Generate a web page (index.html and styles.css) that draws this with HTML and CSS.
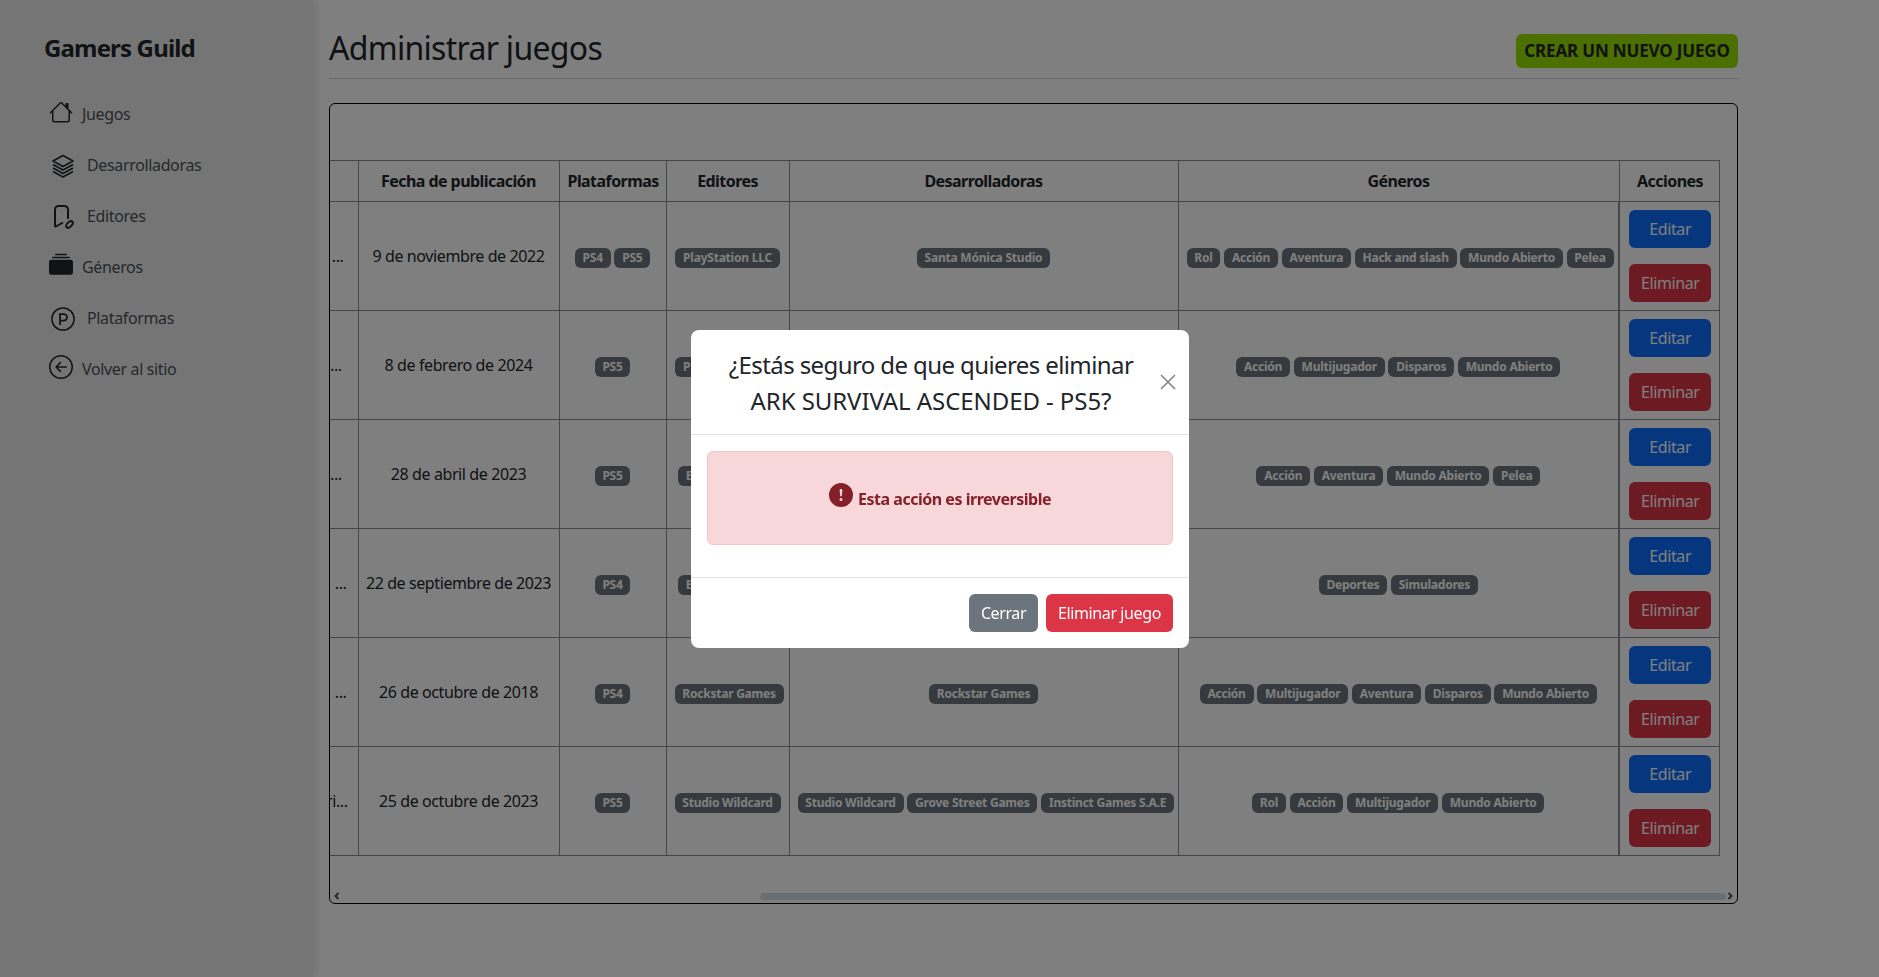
FILE: index.html
```html
<!DOCTYPE html>
<html lang="es">
<head>
<meta charset="utf-8">
<title>Administrar juegos</title>
<link rel="stylesheet" href="styles.css">
</head>
<body>
<div class="layout">
  <aside class="sidebar">
    <div class="brand">Gamers Guild</div>
    <nav class="nav">
      <a class="nav-item"><svg class="ico" viewBox="0 0 16 16"><path fill="currentColor" d="M8.707 1.5a1 1 0 0 0-1.414 0L.646 8.146a.5.5 0 0 0 .708.708L2 8.207V13.5A1.5 1.5 0 0 0 3.5 15h9a1.5 1.5 0 0 0 1.5-1.5V8.207l.646.647a.5.5 0 0 0 .708-.708L13 5.793V2.5a.5.5 0 0 0-.5-.5h-1a.5.5 0 0 0-.5.5v1.293L8.707 1.5ZM13 7.207V13.5a.5.5 0 0 1-.5.5h-9a.5.5 0 0 1-.5-.5V7.207l5-5 5 5Z"/></svg><span>Juegos</span></a>
      <a class="nav-item nav-item--wide"><svg class="ico" viewBox="0 0 24 24" fill="none" stroke="currentColor" stroke-width="1.6" stroke-linejoin="round"><path d="M12 1.5 22 7l-10 5.500L2 7z"/><path d="M2 10.500l10 5.500 10-5.500M2 14l10 5.500L22 14M2 17.500 12 23l10-5.500"/></svg><span>Desarrolladoras</span></a>
      <a class="nav-item nav-item--wide"><svg class="ico" viewBox="0 0 24 24" fill="none" stroke="currentColor" stroke-width="2"><path d="M4 22V4.500A3.500 3.500 0 0 1 7.500 1h6A3.500 3.500 0 0 1 17 4.500V14M4 22l8-4.500"/><ellipse cx="18.500" cy="19.500" rx="4" ry="2.300" transform="rotate(-45 18.500 19.500)"/></svg><span>Editores</span></a>
      <a class="nav-item"><svg class="ico" viewBox="0 0 16 16"><path fill="currentColor" d="M0 13a1.500 1.500 0 0 0 1.500 1.500h13A1.500 1.500 0 0 0 16 13V6a1.500 1.500 0 0 0-1.500-1.500h-13A1.500 1.500 0 0 0 0 6v7zM2 3a.5.5 0 0 0 .5.5h11a.5.5 0 0 0 0-1h-11A.5.5 0 0 0 2 3zm2-2a.5.5 0 0 0 .5.5h7a.5.5 0 0 0 0-1h-7A.5.5 0 0 0 4 1z"/></svg><span>Géneros</span></a>
      <a class="nav-item nav-item--wide"><svg class="ico" viewBox="0 0 16 16" fill="none" stroke="currentColor"><circle cx="8" cy="8" r="7.400" stroke-width="1"/><path stroke-width="1.200" d="M6 12V4.700h2.500a2.200 2.200 0 0 1 0 4.400H6"/></svg><span>Plataformas</span></a>
      <a class="nav-item"><svg class="ico" viewBox="0 0 16 16" fill="none" stroke="currentColor"><circle cx="8" cy="8" r="7.500" stroke-width="1"/><path stroke-width="1" stroke-linecap="round" stroke-linejoin="round" d="M11.500 8H4.700M7.600 5.100 4.700 8l2.900 2.900"/></svg><span>Volver al sitio</span></a>
    </nav>
  </aside>

  <main class="main">
    <header class="page-head">
      <h1 class="page-title">Administrar juegos</h1>
      <button class="btn btn-create">CREAR UN NUEVO JUEGO</button>
    </header>

    <section class="card">
      <div class="table-wrap">
        <table class="games">
          <colgroup>
            <col class="c-name"><col class="c-date"><col class="c-plat"><col class="c-pub"><col class="c-dev"><col class="c-gen"><col class="c-act">
          </colgroup>
          <thead>
            <tr><th></th><th>Fecha de publicación</th><th>Plataformas</th><th>Editores</th><th>Desarrolladoras</th><th>Géneros</th><th>Acciones</th></tr>
          </thead>
          <tbody>
            <tr>
              <td class="name name-a">...</td>
              <td>9 de noviembre de 2022</td>
              <td><span class="badge">PS4</span> <span class="badge">PS5</span></td>
              <td><span class="badge">PlayStation LLC</span></td>
              <td><span class="badge">Santa Mónica Studio</span></td>
              <td><span class="badge">Rol</span> <span class="badge">Acción</span> <span class="badge">Aventura</span> <span class="badge">Hack and slash</span> <span class="badge">Mundo Abierto</span> <span class="badge">Pelea</span></td>
              <td class="actions"><button class="btn btn-edit">Editar</button><button class="btn btn-del">Eliminar</button></td>
            </tr>
            <tr>
              <td class="name name-b">...</td>
              <td>8 de febrero de 2024</td>
              <td><span class="badge">PS5</span></td>
              <td><span class="badge">PlayStation LLC</span></td>
              <td></td>
              <td><span class="badge">Acción</span> <span class="badge">Multijugador</span> <span class="badge">Disparos</span> <span class="badge">Mundo Abierto</span></td>
              <td class="actions"><button class="btn btn-edit">Editar</button><button class="btn btn-del">Eliminar</button></td>
            </tr>
            <tr>
              <td class="name name-c">...</td>
              <td>28 de abril de 2023</td>
              <td><span class="badge">PS5</span></td>
              <td><span class="badge">Electronic Arts</span></td>
              <td></td>
              <td><span class="badge">Acción</span> <span class="badge">Aventura</span> <span class="badge">Mundo Abierto</span> <span class="badge">Pelea</span></td>
              <td class="actions"><button class="btn btn-edit">Editar</button><button class="btn btn-del">Eliminar</button></td>
            </tr>
            <tr>
              <td class="name name-d">...</td>
              <td>22 de septiembre de 2023</td>
              <td><span class="badge">PS4</span></td>
              <td><span class="badge">Electronic Arts</span></td>
              <td></td>
              <td><span class="badge">Deportes</span> <span class="badge">Simuladores</span></td>
              <td class="actions"><button class="btn btn-edit">Editar</button><button class="btn btn-del">Eliminar</button></td>
            </tr>
            <tr>
              <td class="name name-d">...</td>
              <td>26 de octubre de 2018</td>
              <td><span class="badge">PS4</span></td>
              <td><span class="badge">Rockstar Games</span></td>
              <td><span class="badge">Rockstar Games</span></td>
              <td><span class="badge">Acción</span> <span class="badge">Multijugador</span> <span class="badge">Aventura</span> <span class="badge">Disparos</span> <span class="badge">Mundo Abierto</span></td>
              <td class="actions"><button class="btn btn-edit">Editar</button><button class="btn btn-del">Eliminar</button></td>
            </tr>
            <tr>
              <td class="name name-e">ri...</td>
              <td>25 de octubre de 2023</td>
              <td><span class="badge">PS5</span></td>
              <td><span class="badge">Studio Wildcard</span></td>
              <td><span class="badge">Studio Wildcard</span> <span class="badge">Grove Street Games</span> <span class="badge">Instinct Games S.A.E</span></td>
              <td><span class="badge">Rol</span> <span class="badge">Acción</span> <span class="badge">Multijugador</span> <span class="badge">Mundo Abierto</span></td>
              <td class="actions"><button class="btn btn-edit">Editar</button><button class="btn btn-del">Eliminar</button></td>
            </tr>
          </tbody>
        </table>
      </div>
      <div class="scrollbar">
        <svg class="sb-arrow" viewBox="0 0 8 8"><path d="M5.500 1 2.500 4l3 3" fill="none" stroke="currentColor" stroke-width="2"/></svg>
        <div class="sb-track"><div class="sb-thumb"></div></div>
        <svg class="sb-arrow" viewBox="0 0 8 8"><path d="M2.500 1l3 3-3 3" fill="none" stroke="currentColor" stroke-width="2"/></svg>
      </div>
    </section>
  </main>
</div>

<div class="backdrop">
  <div class="modal">
    <div class="modal-header">
      <h2 class="modal-title"><span class="title-line title-line--a">¿Estás seguro de que quieres eliminar</span> <span class="title-line title-line--b">ARK SURVIVAL ASCENDED - PS5?</span></h2>
      <svg class="close" viewBox="0 0 16 16"><path d="M1 1l14 14M15 1 1 15" stroke="currentColor" stroke-width="1.500" fill="none"/></svg>
    </div>
    <div class="modal-body">
      <div class="alert">
        <svg class="alert-ico" viewBox="0 0 16 16"><path fill="currentColor" d="M16 8A8 8 0 1 1 0 8a8 8 0 0 1 16 0zM8 4a.905.905 0 0 0-.9.995l.35 3.507a.552.552 0 0 0 1.100 0l.35-3.507A.905.905 0 0 0 8 4zm.002 6a1 1 0 1 0 0 2 1 1 0 0 0 0-2z"/></svg>
        <span class="alert-text">Esta acción es irreversible</span>
      </div>
    </div>
    <div class="modal-footer">
      <button class="btn btn-close">Cerrar</button>
      <button class="btn btn-confirm">Eliminar juego</button>
    </div>
  </div>
</div>
</body>
</html>
```

FILE: styles.css
```css
* { box-sizing: border-box; }
html, body { margin: 0; height: 100%; }
body {
  font-family: "Noto Sans", "Open Sans", sans-serif;
  font-size: 16px;
  line-height: 1.5;
  color: #212529;
  background: #fff;
  overflow: hidden;
  letter-spacing: -0.025em;
}
.layout { display: flex; height: 977px; }

.sidebar {
  flex: 0 0 313px;
  background: #ebebeb;
  box-shadow: 3px 0 8px rgba(0,0,0,.1);
  padding: 30px 0 0 44px;
}
.brand { font-size: 24px; font-weight: 700; line-height: 36px; letter-spacing: -0.035em; }
.nav { display: flex; flex-direction: column; margin-top: 22px; }
.nav-item {
  display: flex;
  align-items: center;
  gap: 9px;
  height: 51px;
  padding-left: 5px;
  color: #4b5056;
  font-size: 16px;
  letter-spacing: -0.022em;
}
.nav-item--wide { padding-left: 7px; gap: 12px; }
.ico { width: 24px; height: 24px; flex: none; color: #212529; position: relative; top: -2px; }
.nav-item--wide .ico { top: 1px; }

.main { flex: 1; padding: 0 141px 0 16px; }
.page-head {
  display: flex;
  justify-content: space-between;
  align-items: flex-start;
  height: 79px;
  border-bottom: 1px solid #d3d3d3;
  padding-top: 24px;
}
.page-title { margin: 0; font-size: 32px; font-weight: 400; line-height: 48px; letter-spacing: -0.022em; }

.btn {
  font: inherit;
  letter-spacing: inherit;
  height: 38px;
  border: 0;
  border-radius: 6px;
  padding: 0;
  color: #fff;
  display: block;
}
.btn-create {
  width: 222px;
  height: 34px;
  margin-top: 10px;
  background: #97e000;
  color: #212529;
  font-weight: 700;
  font-size: 17px;
  letter-spacing: -0.01em;
}

.card {
  margin-top: 24px;
  height: 801px;
  border: 1px solid #000;
  border-radius: 6px;
  padding-top: 56px;
  overflow: hidden;
}
.table-wrap { overflow: hidden; }
.games {
  border-collapse: collapse;
  table-layout: fixed;
  width: 1389px;
  text-align: center;
}
.c-name { width: 28px; }
.c-date { width: 201px; }
.c-plat { width: 107px; }
.c-pub { width: 123px; }
.c-dev { width: 389px; }
.c-gen { width: 441px; }
.c-act { width: 100px; }

.games th, .games td { border: 1px solid #8b8e94; vertical-align: middle; padding: 8px; white-space: nowrap; }
.games th { height: 41px; font-weight: 700; letter-spacing: -0.035em; }
.games th:last-child { padding: 8px 7px 8px 9px; }
.games td { height: 109px; }
.games td:nth-child(2) { padding: 8px 0; }
.games th:first-child, .games td:first-child { border-left: 0; }
.games td.name { padding: 0; text-align: right; overflow: hidden; }
.games td.name-a { padding-right: 14px; }
.games td.name-b { padding-right: 18px; }
.games td.name-c { padding-right: 17px; }
.games td.name-d { padding-right: 11px; }
.games td.name-e { text-align: left; text-indent: -4px; }
.games td.actions { border-left-width: 2px; padding: 8px 7px 8px 9px; }
.actions .btn { width: 82px; margin: 0 auto; }
.actions .btn + .btn { margin-top: 16px; }
.btn-edit { background: #0d6efd; }
.btn-del { background: #dc3545; }

.badge {
  display: inline-block;
  font-size: 12px;
  font-weight: 700;
  line-height: 1;
  letter-spacing: -0.019em;
  padding: 4.200px 7.800px;
  border-radius: 6px;
  background: #6c757d;
  color: #fff;
  white-space: nowrap;
}

.scrollbar {
  display: flex;
  align-items: center;
  margin-top: 36px;
  height: 8px;
  padding: 0 3px;
}
.sb-arrow { width: 8px; height: 8px; color: #505050; flex: none; }
.sb-track { flex: 1; height: 7px; padding-left: 419px; }
.sb-thumb { height: 7px; border-radius: 4px; background: #d3dde4; }

.backdrop {
  position: fixed;
  inset: 0;
  background: rgba(0,0,0,.5);
}
.modal {
  position: absolute;
  left: 691px;
  top: 330px;
  width: 498px;
  height: 318px;
  background: #fff;
  border-radius: 8px;
  display: flex;
  flex-direction: column;
}
.modal-header {
  display: flex;
  align-items: center;
  height: 105px;
  padding: 0 16px;
  border-bottom: 1px solid #dee2e6;
}
.modal-title {
  margin: 0;
  flex: 1;
  padding-top: 2px;
  font-size: 24px;
  font-weight: 400;
  line-height: 36px;
  text-align: center;
}
.title-line { display: block; }
.title-line--a { letter-spacing: -0.025em; }
.title-line--b { letter-spacing: -0.003em; }
.close { width: 16px; height: 16px; flex: none; color: #808080; margin: 0 -3px 0 5px; }
.modal-body { height: 143px; padding: 16px; border-bottom: 1px solid #dee2e6; }
.alert {
  height: 94px;
  display: flex;
  align-items: center;
  justify-content: center;
  gap: 5px;
  background: #f8d7da;
  border: 1px solid #f5c2c7;
  border-radius: 6px;
  color: #842029;
  font-weight: 700;
  letter-spacing: -0.03em;
}
.alert-ico { width: 24px; height: 24px; flex: none; position: relative; top: -3px; }
.alert-text { position: relative; top: 1px; }
.modal-footer {
  display: flex;
  justify-content: flex-end;
  gap: 8px;
  padding: 16px;
}
.btn-close { width: 69px; background: #6c757d; }
.btn-confirm { width: 127px; background: #dc3545; }
```
